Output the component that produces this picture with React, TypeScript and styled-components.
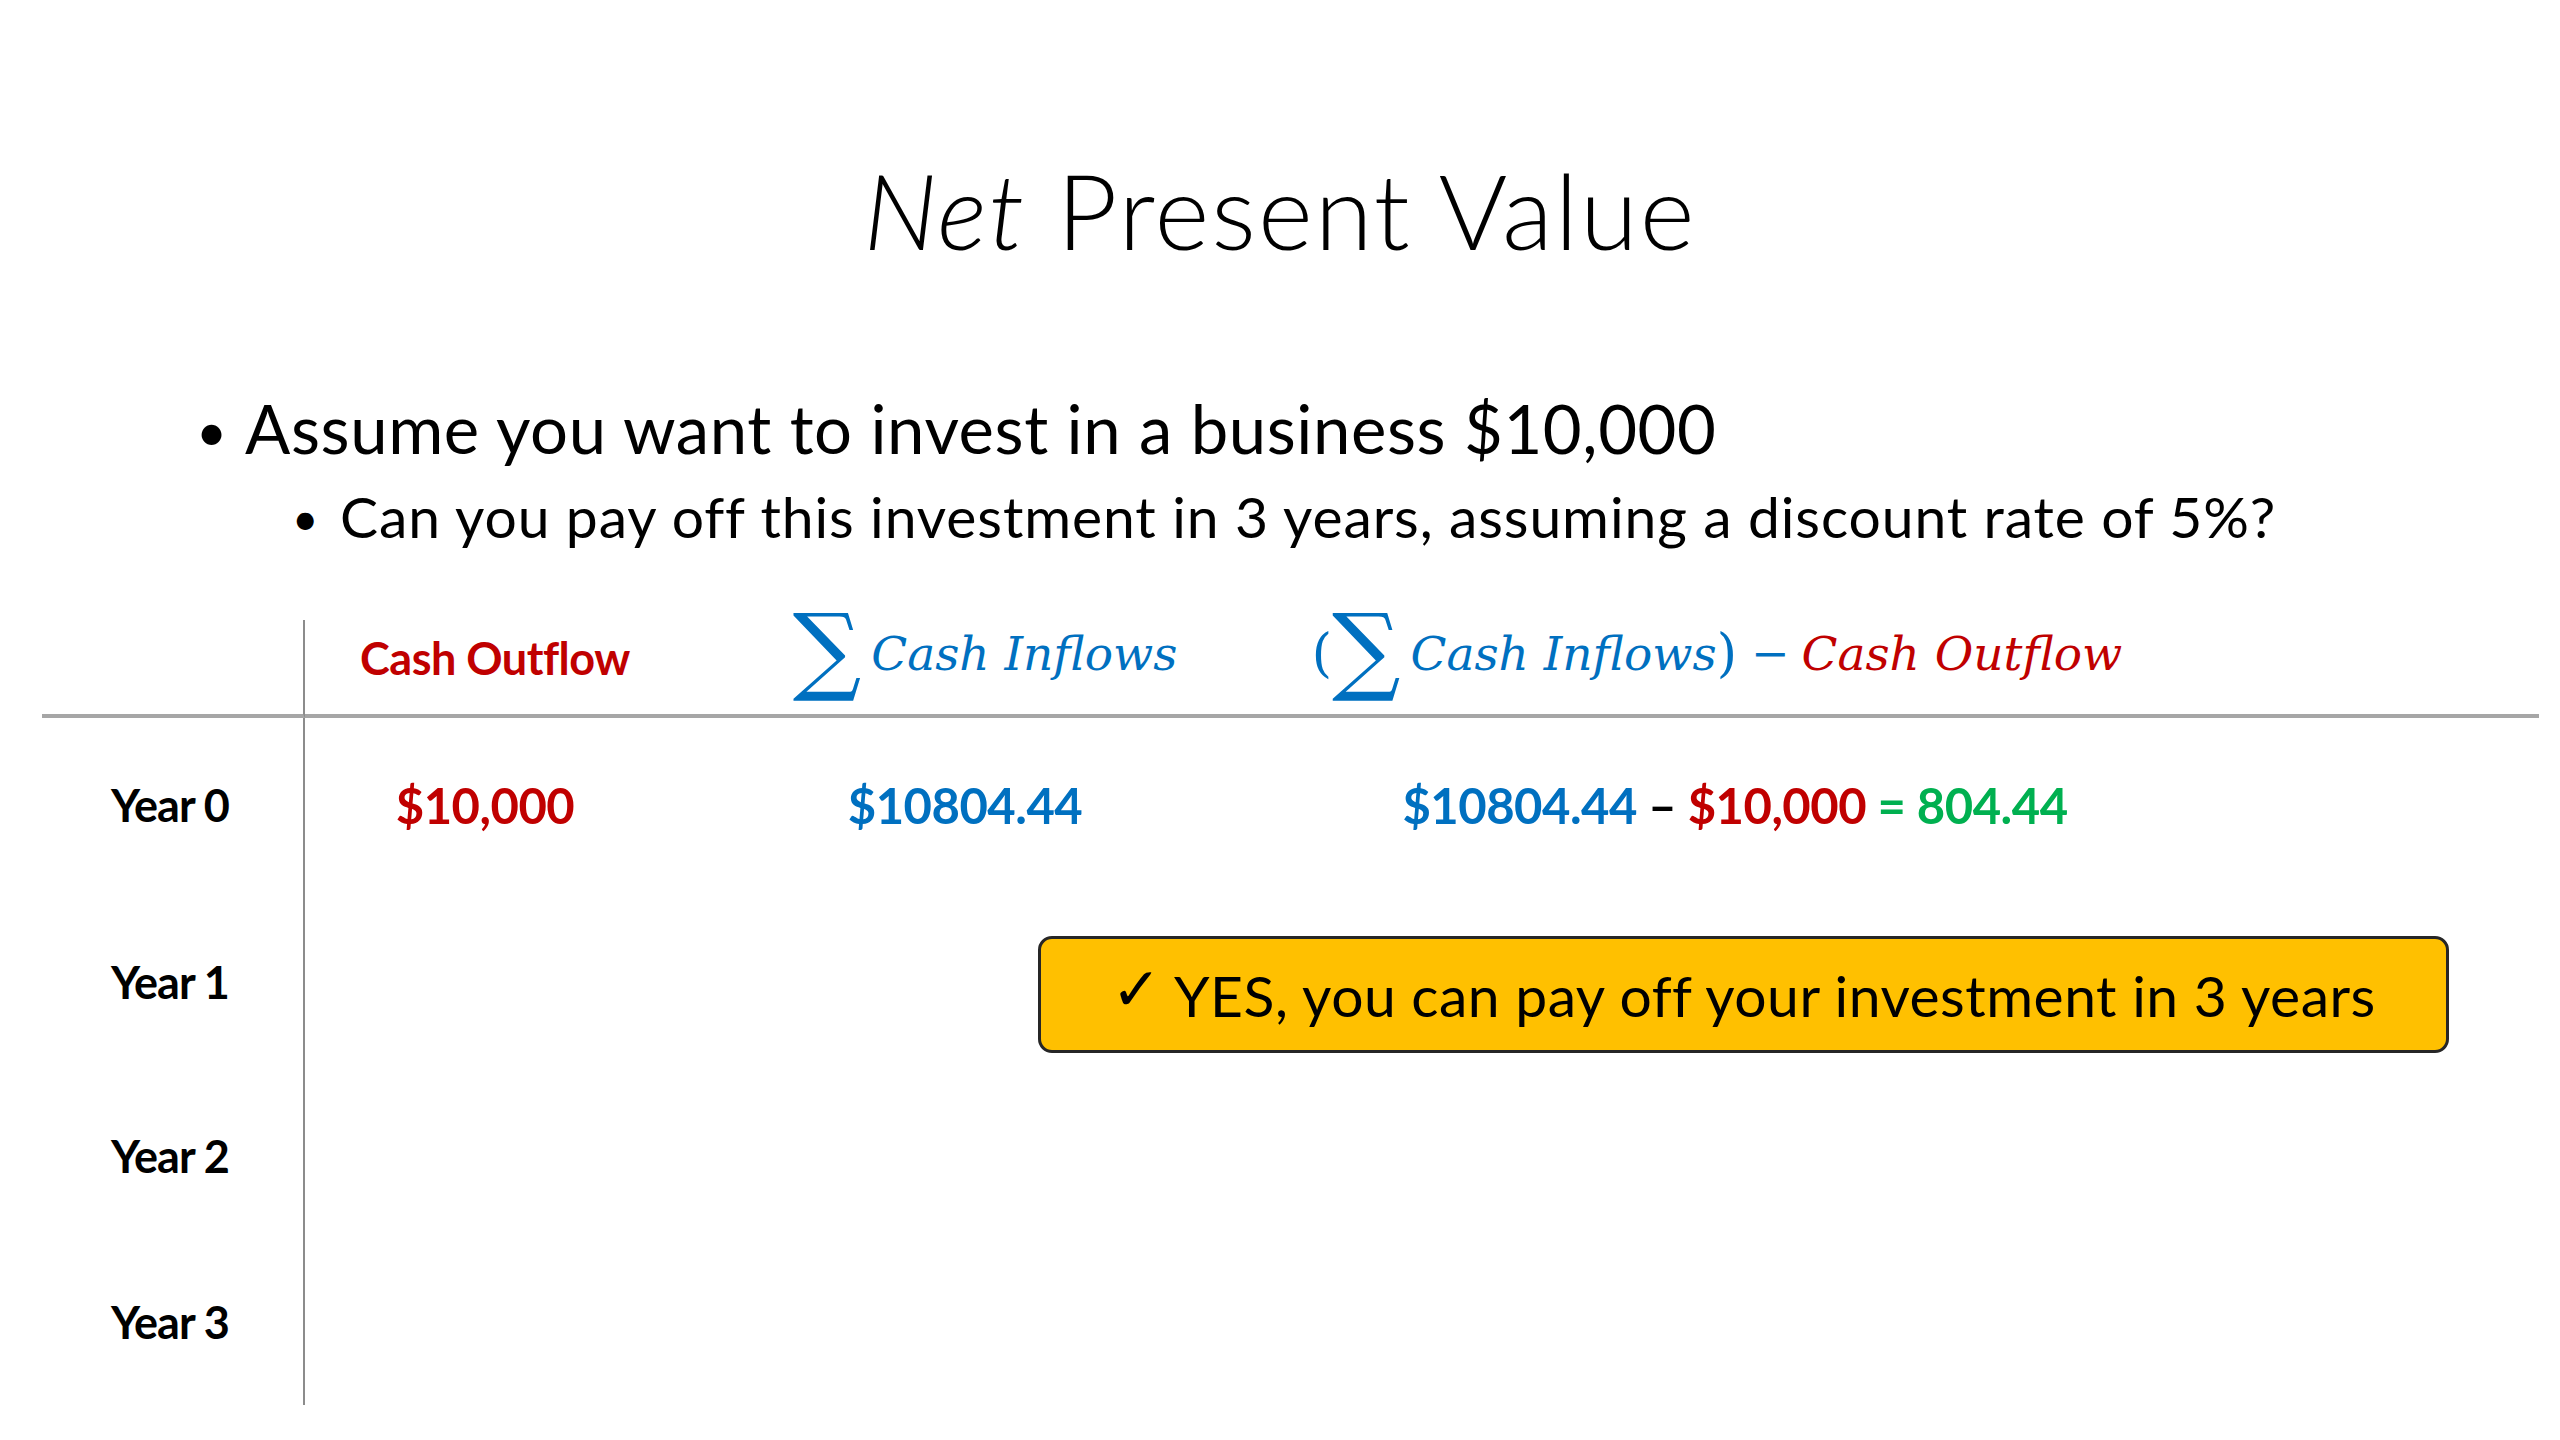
import styled, { createGlobalStyle } from "styled-components";

const GlobalStyle = createGlobalStyle`
  html, body {
    margin: 0;
    padding: 0;
    background: #ffffff;
  }
  body {
    font-family: Lato, "Open Sans", "DejaVu Sans", sans-serif;
    color: #000000;
  }
`;

const RED = "#c00000";
const BLUE = "#0070c0";
const GREEN = "#00b050";

const Slide = styled.div`
  width: 2560px;
  height: 1440px;
  overflow: hidden;
  background: #ffffff;
  display: flex;
  flex-direction: column;
`;

const Title = styled.h1`
  margin: 157px 0 0;
  font-size: 105px;
  font-weight: 300;
  line-height: 1;
  text-align: center;
  letter-spacing: 2px;

  em {
    font-style: italic;
  }
`;

const Bullets = styled.ul`
  list-style: none;
  margin: 133px 0 0;
  padding: 0;
`;

const Bullet = styled.li<{ $level: 1 | 2 }>`
  display: flex;
  align-items: baseline;
  line-height: 1;
  font-size: ${(p) => (p.$level === 1 ? 67 : 57)}px;
  margin-top: ${(p) => (p.$level === 1 ? 0 : 26)}px;
  padding-left: ${(p) => (p.$level === 1 ? 196 : 292)}px;
  letter-spacing: ${(p) => (p.$level === 1 ? 0.6 : 0.9)}px;

  &::before {
    content: "•";
    font-size: 0.8em;
    width: ${(p) => (p.$level === 1 ? 49 : 48)}px;
    flex: none;
    position: relative;
    top: -0.06em;
  }
`;

const Table = styled.div`
  position: relative;
  margin: 75px 21px 0 42px;
  display: grid;
  grid-template-columns: 263px 380px 600px 880px 1fr;
  grid-template-rows: 98px 173px 182px 166px 166px;
`;

const HeadCell = styled.div<{ $label?: boolean; $shift?: number }>`
  border-bottom: 4px solid #a6a6a6;
  border-right: ${(p) => (p.$label ? "2px solid #8c8c8c" : "none")};
  display: flex;
  align-items: center;
  justify-content: center;
  padding-bottom: 18px;
  padding-right: ${(p) => Math.max(0, -(p.$shift || 0))}px;
`;

const Cell = styled.div<{ $label?: boolean; $shift?: number }>`
  display: flex;
  align-items: center;
  justify-content: ${(p) => (p.$label ? "flex-start" : "center")};
  padding-left: ${(p) => (p.$label ? 69 : Math.max(0, p.$shift || 0))}px;
  padding-right: ${(p) => Math.max(0, -(p.$shift || 0))}px;
  border-right: ${(p) => (p.$label ? "2px solid #8c8c8c" : "none")};
  font-size: 45px;
  font-weight: 700;
  letter-spacing: -1px;
  white-space: pre;
`;

const Value = styled.span<{ $color: string; $size?: number }>`
  color: ${(p) => p.$color};
  font-size: ${(p) => p.$size || 49}px;
  font-weight: 700;
  letter-spacing: -0.5px;
`;

const MathRow = styled.span<{ $color?: string }>`
  display: inline-flex;
  align-items: center;
  color: ${(p) => p.$color || BLUE};
  font-family: "DejaVu Serif", "Liberation Serif", serif;
  white-space: pre;
  transform: translateY(-5px);
`;

const Sigma = styled.span`
  font-family: "DejaVu Serif", "Liberation Serif", serif;
  font-size: 96px;
  line-height: 1;
  font-weight: 300;
  margin: 0 10px 0 0;
  transform: translateY(-4px);
`;

const MathVar = styled.span<{ $color: string }>`
  color: ${(p) => p.$color};
  font-style: italic;
  font-size: 47px;
`;

const Paren = styled.span`
  color: ${BLUE};
  font-size: 52px;
  font-weight: 300;
`;

const Op = styled.span`
  color: ${BLUE};
  font-size: 46px;
  margin: 0 12px 0 14px;
`;

const Callout = styled.div`
  position: absolute;
  left: 996px;
  top: 316px;
  width: 1411px;
  height: 117px;
  box-sizing: border-box;
  background: #ffc000;
  border: 3px solid #262626;
  border-radius: 14px;
  display: flex;
  align-items: center;
  justify-content: center;
  font-size: 57px;
  letter-spacing: 0.5px;
  white-space: pre;
`;

const Check = styled.span`
  font-family: "DejaVu Sans", sans-serif;
  font-size: 60px;
  font-weight: 700;
  margin-right: 12px;
  transform: translateY(-6px);
`;

const years = ["Year 0", "Year 1", "Year 2", "Year 3"];

const App = () => {
  return (
    <Slide>
      <GlobalStyle />
      <Title>
        <em>Net</em> Present Value
      </Title>
      <Bullets>
        <Bullet $level={1}>Assume you want to invest in a business $10,000</Bullet>
        <Bullet $level={2}>
          Can you pay off this investment in 3 years, assuming a discount rate of 5%?
        </Bullet>
      </Bullets>

      <Table>
        <HeadCell $label />
        <HeadCell>
          <Value $color={RED} $size={45}>
            Cash Outflow
          </Value>
        </HeadCell>
        <HeadCell>
          <MathRow>
            <Sigma>∑</Sigma>
            <MathVar $color={BLUE}>Cash Inflows</MathVar>
          </MathRow>
        </HeadCell>
        <HeadCell $shift={-16}>
          <MathRow>
            <Paren>(</Paren>
            <Sigma>∑</Sigma>
            <MathVar $color={BLUE}>Cash Inflows</MathVar>
            <Paren>)</Paren>
            <Op>−</Op>
            <MathVar $color={RED}>Cash Outflow</MathVar>
          </MathRow>
        </HeadCell>
        <HeadCell />

        {years.map((year, i) => (
          <Row key={year} year={year} first={i === 0} />
        ))}

        <Callout>
          <Check>✓</Check>YES, you can pay off your investment in 3 years
        </Callout>
      </Table>
    </Slide>
  );
};

const Row = ({ year, first }: { year: string; first: boolean }) => (
  <>
    <Cell $label>{year}</Cell>
    <Cell $shift={-20}>{first && <Value $color={RED}>$10,000</Value>}</Cell>
    <Cell $shift={-40}>{first && <Value $color={BLUE}>$10804.44</Value>}</Cell>
    <Cell $shift={20}>
      {first && (
        <>
          <Value $color={BLUE}>$10804.44</Value>
          <Value $color="#000000"> – </Value>
          <Value $color={RED}>$10,000</Value>
          <Value $color={GREEN}> = 804.44</Value>
        </>
      )}
    </Cell>
    <Cell />
  </>
);

export default App;
